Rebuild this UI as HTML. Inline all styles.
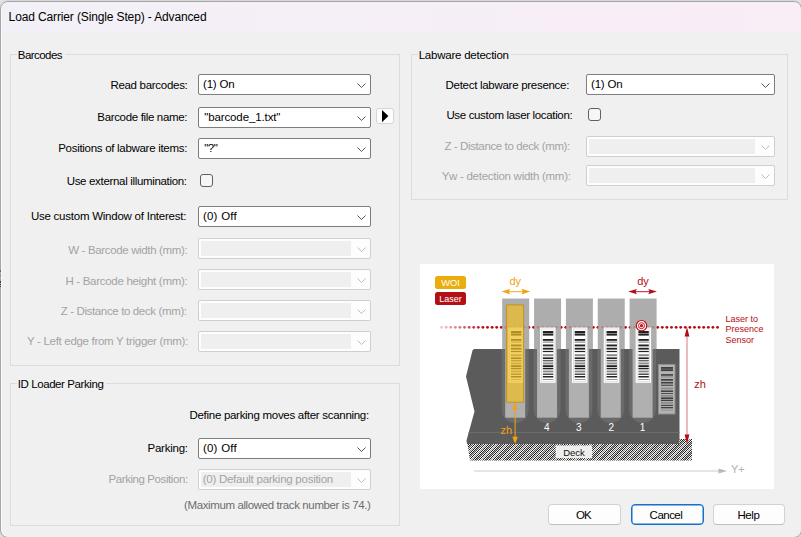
<!DOCTYPE html>
<html><head><meta charset="utf-8"><style>
*{margin:0;padding:0;box-sizing:border-box}
html,body{width:801px;height:537px;overflow:hidden;background:#e3e3e3;font-family:"Liberation Sans",sans-serif;font-size:11.5px;letter-spacing:-0.3px;color:#000}
#win{position:absolute;left:0px;top:1px;width:802px;height:537px;border-radius:8px;background:#f0f0f0;overflow:hidden}
#c{position:absolute;left:0px;top:-1px;width:801px;height:537px}
#brd{position:absolute;left:0px;top:1px;width:802px;height:537px;border-radius:8px;border:1px solid #a6a6a6;box-shadow:0 0 1.5px rgba(0,0,0,.25), inset 1px 0 0 rgba(255,255,255,.6);z-index:5}
#art div{position:absolute;left:0;width:1px;background:#3a3a3a;z-index:6}
#title{position:absolute;left:0;top:0;width:801px;height:32px;background:linear-gradient(90deg,#f2f0f7 0%,#f5eff7 38%,#f7eef7 70%,#f9edf6 100%)}
#title span{position:absolute;left:9px;top:10px;font-size:12px;white-space:nowrap}
.a{position:absolute;white-space:nowrap}
.lbl{position:absolute;white-space:nowrap;text-align:right}
.dis{color:#a3a3a3}
.grp{position:absolute;border:1px solid #dcdcdc}
.gap{position:absolute;height:4px;background:#f0f0f0}
.cb{position:absolute;height:21px;background:#fff;border:1px solid #7d7d7d;border-radius:2px}
.cb .t{position:absolute;left:4px;top:3px;white-space:nowrap}
.cb svg{position:absolute;right:4px;top:8px}
.cb.d{background:#fdfdfd;border-color:#cfcfcf}
.cb.d .in{position:absolute;left:2px;top:2px;bottom:2px;right:19px;background:#efefef}
.chk{position:absolute;width:13px;height:13px;border:1px solid #5f5f5f;border-radius:3px;background:#f6f6f6}
.abtn{position:absolute;width:18px;height:16px;background:#fdfdfd;border:1px solid #d5d5d5;border-radius:3px}
.btn{position:absolute;height:21px;background:#fdfdfd;border:1px solid #d3d3d3;border-bottom-color:#bfbfbf;border-radius:4px;text-align:center;line-height:21px;font-size:11.5px}
.btn.def{border:1px solid #1570cc;box-shadow:inset 0 0 0 0.5px #1570cc}
</style></head><body>
<div id="win"><div id="c">
<div id="title"><span style="left:8.6px;letter-spacing:-0.133px">Load Carrier (Single Step) - Advanced</span></div>
<div class="grp" style="left:10px;top:54px;width:390px;height:312px"></div>
<div class="gap" style="left:17px;top:52px;width:48px"></div>
<div class="a" style="left:17.8px;top:49px;letter-spacing:-0.543px;">Barcodes</div>
<div class="a" style="left:110.4px;top:79px;letter-spacing:-0.292px">Read barcodes:</div>
<div class="cb" style="left:198px;top:74px;width:173px"><span class="t" style="left:4.0px;letter-spacing:-0.18px">(1) On</span><svg width="9" height="5"><path d="M0.5 0.5 L4.5 4.5 L8.5 0.5" fill="none" stroke="#555" stroke-width="1"/></svg></div>
<div class="a" style="left:97.3px;top:111px;letter-spacing:-0.335px">Barcode file name:</div>
<div class="cb" style="left:198px;top:107px;width:173px"><span class="t" style="left:5.2px;letter-spacing:-0.114px">"barcode_1.txt"</span><svg width="9" height="5"><path d="M0.5 0.5 L4.5 4.5 L8.5 0.5" fill="none" stroke="#555" stroke-width="1"/></svg></div>
<div class="a" style="left:58.2px;top:142px;letter-spacing:-0.292px">Positions of labware items:</div>
<div class="cb" style="left:198px;top:138px;width:173px"><span class="t" style="left:5.2px;letter-spacing:-0.4px">"?"</span><svg width="9" height="5"><path d="M0.5 0.5 L4.5 4.5 L8.5 0.5" fill="none" stroke="#555" stroke-width="1"/></svg></div>
<div class="a" style="left:66.7px;top:175px;letter-spacing:-0.324px">Use external illumination:</div>
<div class="chk" style="left:200px;top:174px"></div>
<div class="a" style="left:30.9px;top:210px;letter-spacing:-0.238px">Use custom Window of Interest:</div>
<div class="cb" style="left:198px;top:206px;width:173px"><span class="t" style="left:3.9px;letter-spacing:0.25px">(0) Off</span><svg width="9" height="5"><path d="M0.5 0.5 L4.5 4.5 L8.5 0.5" fill="none" stroke="#555" stroke-width="1"/></svg></div>
<div class="a dis" style="left:68.2px;top:244px;letter-spacing:-0.345px">W - Barcode width (mm):</div>
<div class="cb d" style="left:198px;top:238px;width:173px"><div class="in"></div><svg width="9" height="5"><path d="M0.5 0.5 L4.5 4.5 L8.5 0.5" fill="none" stroke="#bdbdbd" stroke-width="1"/></svg></div>
<div class="a dis" style="left:65.4px;top:275px;letter-spacing:-0.296px">H - Barcode height (mm):</div>
<div class="cb d" style="left:198px;top:269px;width:173px"><div class="in"></div><svg width="9" height="5"><path d="M0.5 0.5 L4.5 4.5 L8.5 0.5" fill="none" stroke="#bdbdbd" stroke-width="1"/></svg></div>
<div class="a dis" style="left:60.7px;top:305px;letter-spacing:-0.364px">Z - Distance to deck (mm):</div>
<div class="cb d" style="left:198px;top:300px;width:173px"><div class="in"></div><svg width="9" height="5"><path d="M0.5 0.5 L4.5 4.5 L8.5 0.5" fill="none" stroke="#bdbdbd" stroke-width="1"/></svg></div>
<div class="a dis" style="left:27.0px;top:335px;letter-spacing:-0.303px">Y - Left edge from Y trigger (mm):</div>
<div class="cb d" style="left:198px;top:331px;width:173px"><div class="in"></div><svg width="9" height="5"><path d="M0.5 0.5 L4.5 4.5 L8.5 0.5" fill="none" stroke="#bdbdbd" stroke-width="1"/></svg></div>
<div class="abtn" style="left:376px;top:108px"><svg width="8" height="13" style="position:absolute;left:5px;top:1px"><path d="M0 0 L6.4 6.1 L0 12.2 Z" fill="#000"/></svg></div>
<div class="grp" style="left:10px;top:383px;width:390px;height:143px"></div>
<div class="gap" style="left:17px;top:381px;width:89px"></div>
<div class="a" style="left:17.7px;top:378px;letter-spacing:-0.406px;">ID Loader Parking</div>
<div class="a" style="left:189.5px;top:409px;letter-spacing:-0.291px;">Define parking moves after scanning:</div>
<div class="a" style="left:147.5px;top:442px;letter-spacing:-0.243px">Parking:</div>
<div class="cb" style="left:198px;top:438px;width:173px"><span class="t" style="left:3.9px;letter-spacing:0.25px">(0) Off</span><svg width="9" height="5"><path d="M0.5 0.5 L4.5 4.5 L8.5 0.5" fill="none" stroke="#555" stroke-width="1"/></svg></div>
<div class="a dis" style="left:108.5px;top:473px;letter-spacing:-0.419px">Parking Position:</div>
<div class="cb d" style="left:198px;top:469px;width:173px"><div class="in"></div><span class="t dis" style="left:3.7px;letter-spacing:-0.256px">(0) Default parking position</span><svg width="9" height="5"><path d="M0.5 0.5 L4.5 4.5 L8.5 0.5" fill="none" stroke="#bdbdbd" stroke-width="1"/></svg></div>
<div class="a" style="left:184.0px;top:499px;letter-spacing:-0.383px;color:#6d6d6d">(Maximum allowed track number is 74.)</div>
<div class="grp" style="left:411px;top:54px;width:377px;height:146px"></div>
<div class="gap" style="left:418px;top:52px;width:93px"></div>
<div class="a" style="left:418.7px;top:49px;letter-spacing:-0.231px;">Labware detection</div>
<div class="a" style="left:445.5px;top:79px;letter-spacing:-0.283px">Detect labware presence:</div>
<div class="cb" style="left:586px;top:74px;width:189px"><span class="t" style="left:4.0px;letter-spacing:-0.18px">(1) On</span><svg width="9" height="5"><path d="M0.5 0.5 L4.5 4.5 L8.5 0.5" fill="none" stroke="#555" stroke-width="1"/></svg></div>
<div class="a" style="left:446.4px;top:109px;letter-spacing:-0.344px">Use custom laser location:</div>
<div class="chk" style="left:588px;top:108px"></div>
<div class="a dis" style="left:444.4px;top:140px;letter-spacing:-0.384px">Z - Distance to deck (mm):</div>
<div class="cb d" style="left:586px;top:136px;width:189px"><div class="in"></div><svg width="9" height="5"><path d="M0.5 0.5 L4.5 4.5 L8.5 0.5" fill="none" stroke="#bdbdbd" stroke-width="1"/></svg></div>
<div class="a dis" style="left:441.7px;top:170px;letter-spacing:-0.276px">Yw - detection width (mm):</div>
<div class="cb d" style="left:586px;top:165px;width:189px"><div class="in"></div><svg width="9" height="5"><path d="M0.5 0.5 L4.5 4.5 L8.5 0.5" fill="none" stroke="#bdbdbd" stroke-width="1"/></svg></div>
<div class="btn" style="left:548px;top:504px;width:73px"></div>
<div class="btn def" style="left:631px;top:504px;width:73px"></div>
<div class="btn" style="left:713px;top:504px;width:72px"></div>
<div class="a" style="left:576.1px;top:509px;letter-spacing:-1.0px">OK</div>
<div class="a" style="left:649.6px;top:509px;letter-spacing:-0.52px">Cancel</div>
<div class="a" style="left:737.5px;top:509px;letter-spacing:-0.433px">Help</div>
<svg style="position:absolute;left:420px;top:264px;letter-spacing:0" width="354" height="225" viewBox="420 264 354 225" font-family="Liberation Sans, sans-serif">
<defs>
<pattern id="hatch" patternUnits="userSpaceOnUse" width="2" height="2">
<rect width="2" height="2" fill="#fff"/><rect x="0" y="0" width="1" height="1" fill="#1e1e1e"/><rect x="1" y="1" width="1" height="1" fill="#1e1e1e"/>
</pattern>
<pattern id="hatch2" patternUnits="userSpaceOnUse" width="3.5" height="3.5" patternTransform="rotate(-45)">
<rect x="0" y="0" width="3.5" height="0.9" fill="#a0a0a0"/>
</pattern>
<linearGradient id="fade" x1="441" y1="0" x2="485" y2="0" gradientUnits="userSpaceOnUse">
<stop offset="0" stop-color="#b40c14" stop-opacity="0"/><stop offset="1" stop-color="#b40c14" stop-opacity="1"/>
</linearGradient>
</defs>
<rect x="420" y="264" width="354" height="225" fill="#fff"/>
<rect x="435" y="276" width="31" height="13" rx="2.5" fill="#e9ae0b"/>
<text x="450.5" y="286.2" font-size="9.4" fill="#fff" text-anchor="middle">WOI</text>
<rect x="435" y="292" width="31" height="13" rx="2.5" fill="#b30f15"/>
<text x="450.5" y="302.3" font-size="9" fill="#fff" text-anchor="middle">Laser</text>
<g><circle cx="441.50" cy="327.3" r="1.35" fill="url(#fade)" opacity="1.0"/><circle cx="446.10" cy="327.3" r="1.35" fill="url(#fade)" opacity="1.0"/><circle cx="450.70" cy="327.3" r="1.35" fill="url(#fade)" opacity="1.0"/><circle cx="455.30" cy="327.3" r="1.35" fill="url(#fade)" opacity="1.0"/><circle cx="459.90" cy="327.3" r="1.35" fill="url(#fade)" opacity="1.0"/><circle cx="464.50" cy="327.3" r="1.35" fill="url(#fade)" opacity="1.0"/><circle cx="469.10" cy="327.3" r="1.35" fill="url(#fade)" opacity="1.0"/><circle cx="473.70" cy="327.3" r="1.35" fill="url(#fade)" opacity="1.0"/><circle cx="478.30" cy="327.3" r="1.35" fill="url(#fade)" opacity="1.0"/><circle cx="482.90" cy="327.3" r="1.35" fill="url(#fade)" opacity="1.0"/><circle cx="487.50" cy="327.3" r="1.35" fill="url(#fade)" opacity="1.0"/><circle cx="492.10" cy="327.3" r="1.35" fill="url(#fade)" opacity="1.0"/><circle cx="496.70" cy="327.3" r="1.35" fill="url(#fade)" opacity="1.0"/><circle cx="501.30" cy="327.3" r="1.35" fill="url(#fade)" opacity="1.0"/><circle cx="505.90" cy="327.3" r="1.35" fill="url(#fade)" opacity="1.0"/><circle cx="510.50" cy="327.3" r="1.35" fill="url(#fade)" opacity="1.0"/><circle cx="515.10" cy="327.3" r="1.35" fill="url(#fade)" opacity="1.0"/><circle cx="519.70" cy="327.3" r="1.35" fill="url(#fade)" opacity="1.0"/><circle cx="524.30" cy="327.3" r="1.35" fill="url(#fade)" opacity="1.0"/><circle cx="528.90" cy="327.3" r="1.35" fill="url(#fade)" opacity="1.0"/><circle cx="533.50" cy="327.3" r="1.35" fill="url(#fade)" opacity="1.0"/><circle cx="538.10" cy="327.3" r="1.35" fill="url(#fade)" opacity="1.0"/><circle cx="542.70" cy="327.3" r="1.35" fill="url(#fade)" opacity="1.0"/><circle cx="547.30" cy="327.3" r="1.35" fill="url(#fade)" opacity="1.0"/><circle cx="551.90" cy="327.3" r="1.35" fill="url(#fade)" opacity="1.0"/><circle cx="556.50" cy="327.3" r="1.35" fill="url(#fade)" opacity="1.0"/><circle cx="561.10" cy="327.3" r="1.35" fill="url(#fade)" opacity="1.0"/><circle cx="565.70" cy="327.3" r="1.35" fill="url(#fade)" opacity="1.0"/><circle cx="570.30" cy="327.3" r="1.35" fill="url(#fade)" opacity="1.0"/><circle cx="574.90" cy="327.3" r="1.35" fill="url(#fade)" opacity="1.0"/><circle cx="579.50" cy="327.3" r="1.35" fill="url(#fade)" opacity="1.0"/><circle cx="584.10" cy="327.3" r="1.35" fill="url(#fade)" opacity="1.0"/><circle cx="588.70" cy="327.3" r="1.35" fill="url(#fade)" opacity="1.0"/><circle cx="593.30" cy="327.3" r="1.35" fill="url(#fade)" opacity="1.0"/><circle cx="597.90" cy="327.3" r="1.35" fill="url(#fade)" opacity="1.0"/><circle cx="602.50" cy="327.3" r="1.35" fill="url(#fade)" opacity="1.0"/><circle cx="607.10" cy="327.3" r="1.35" fill="url(#fade)" opacity="1.0"/><circle cx="611.70" cy="327.3" r="1.35" fill="url(#fade)" opacity="1.0"/><circle cx="616.30" cy="327.3" r="1.35" fill="url(#fade)" opacity="1.0"/><circle cx="620.90" cy="327.3" r="1.35" fill="url(#fade)" opacity="1.0"/><circle cx="625.50" cy="327.3" r="1.35" fill="url(#fade)" opacity="1.0"/><circle cx="630.10" cy="327.3" r="1.35" fill="url(#fade)" opacity="1.0"/><circle cx="634.70" cy="327.3" r="1.35" fill="url(#fade)" opacity="1.0"/><circle cx="639.30" cy="327.3" r="1.35" fill="url(#fade)" opacity="1.0"/><circle cx="643.90" cy="327.3" r="1.35" fill="url(#fade)" opacity="1.0"/><circle cx="648.50" cy="327.3" r="1.35" fill="url(#fade)" opacity="1.0"/><circle cx="653.10" cy="327.3" r="1.35" fill="url(#fade)" opacity="1.0"/><circle cx="657.70" cy="327.3" r="1.35" fill="url(#fade)" opacity="1.0"/><circle cx="662.30" cy="327.3" r="1.35" fill="url(#fade)" opacity="1.0"/><circle cx="666.90" cy="327.3" r="1.35" fill="url(#fade)" opacity="1.0"/><circle cx="671.50" cy="327.3" r="1.35" fill="url(#fade)" opacity="1.0"/><circle cx="676.10" cy="327.3" r="1.35" fill="url(#fade)" opacity="1.0"/><circle cx="680.70" cy="327.3" r="1.35" fill="url(#fade)" opacity="1.0"/><circle cx="685.30" cy="327.3" r="1.35" fill="url(#fade)" opacity="1.0"/><circle cx="689.90" cy="327.3" r="1.35" fill="url(#fade)" opacity="1.0"/><circle cx="694.50" cy="327.3" r="1.35" fill="url(#fade)" opacity="1.0"/><circle cx="699.10" cy="327.3" r="1.35" fill="url(#fade)" opacity="1.0"/><circle cx="703.70" cy="327.3" r="1.35" fill="url(#fade)" opacity="1.0"/><circle cx="708.30" cy="327.3" r="1.35" fill="url(#fade)" opacity="1.0"/><circle cx="712.90" cy="327.3" r="1.35" fill="url(#fade)" opacity="1.0"/><circle cx="717.50" cy="327.3" r="1.35" fill="url(#fade)" opacity="1.0"/></g>
<rect x="502.2" y="298.5" width="27" height="51" fill="#adadad"/>
<rect x="534.05" y="298.5" width="27" height="51" fill="#adadad"/>
<rect x="565.9" y="298.5" width="27" height="51" fill="#adadad"/>
<rect x="597.75" y="298.5" width="27" height="51" fill="#adadad"/>
<rect x="629.6" y="298.5" width="27" height="51" fill="#adadad"/>
<g opacity="0.22"><circle cx="441.50" cy="327.3" r="1.35" fill="#b40c14" opacity="1.0"/><circle cx="446.10" cy="327.3" r="1.35" fill="#b40c14" opacity="1.0"/><circle cx="450.70" cy="327.3" r="1.35" fill="#b40c14" opacity="1.0"/><circle cx="455.30" cy="327.3" r="1.35" fill="#b40c14" opacity="1.0"/><circle cx="459.90" cy="327.3" r="1.35" fill="#b40c14" opacity="1.0"/><circle cx="464.50" cy="327.3" r="1.35" fill="#b40c14" opacity="1.0"/><circle cx="469.10" cy="327.3" r="1.35" fill="#b40c14" opacity="1.0"/><circle cx="473.70" cy="327.3" r="1.35" fill="#b40c14" opacity="1.0"/><circle cx="478.30" cy="327.3" r="1.35" fill="#b40c14" opacity="1.0"/><circle cx="482.90" cy="327.3" r="1.35" fill="#b40c14" opacity="1.0"/><circle cx="487.50" cy="327.3" r="1.35" fill="#b40c14" opacity="1.0"/><circle cx="492.10" cy="327.3" r="1.35" fill="#b40c14" opacity="1.0"/><circle cx="496.70" cy="327.3" r="1.35" fill="#b40c14" opacity="1.0"/><circle cx="501.30" cy="327.3" r="1.35" fill="#b40c14" opacity="1.0"/><circle cx="505.90" cy="327.3" r="1.35" fill="#b40c14" opacity="1.0"/><circle cx="510.50" cy="327.3" r="1.35" fill="#b40c14" opacity="1.0"/><circle cx="515.10" cy="327.3" r="1.35" fill="#b40c14" opacity="1.0"/><circle cx="519.70" cy="327.3" r="1.35" fill="#b40c14" opacity="1.0"/><circle cx="524.30" cy="327.3" r="1.35" fill="#b40c14" opacity="1.0"/><circle cx="528.90" cy="327.3" r="1.35" fill="#b40c14" opacity="1.0"/><circle cx="533.50" cy="327.3" r="1.35" fill="#b40c14" opacity="1.0"/><circle cx="538.10" cy="327.3" r="1.35" fill="#b40c14" opacity="1.0"/><circle cx="542.70" cy="327.3" r="1.35" fill="#b40c14" opacity="1.0"/><circle cx="547.30" cy="327.3" r="1.35" fill="#b40c14" opacity="1.0"/><circle cx="551.90" cy="327.3" r="1.35" fill="#b40c14" opacity="1.0"/><circle cx="556.50" cy="327.3" r="1.35" fill="#b40c14" opacity="1.0"/><circle cx="561.10" cy="327.3" r="1.35" fill="#b40c14" opacity="1.0"/><circle cx="565.70" cy="327.3" r="1.35" fill="#b40c14" opacity="1.0"/><circle cx="570.30" cy="327.3" r="1.35" fill="#b40c14" opacity="1.0"/><circle cx="574.90" cy="327.3" r="1.35" fill="#b40c14" opacity="1.0"/><circle cx="579.50" cy="327.3" r="1.35" fill="#b40c14" opacity="1.0"/><circle cx="584.10" cy="327.3" r="1.35" fill="#b40c14" opacity="1.0"/><circle cx="588.70" cy="327.3" r="1.35" fill="#b40c14" opacity="1.0"/><circle cx="593.30" cy="327.3" r="1.35" fill="#b40c14" opacity="1.0"/><circle cx="597.90" cy="327.3" r="1.35" fill="#b40c14" opacity="1.0"/><circle cx="602.50" cy="327.3" r="1.35" fill="#b40c14" opacity="1.0"/><circle cx="607.10" cy="327.3" r="1.35" fill="#b40c14" opacity="1.0"/><circle cx="611.70" cy="327.3" r="1.35" fill="#b40c14" opacity="1.0"/><circle cx="616.30" cy="327.3" r="1.35" fill="#b40c14" opacity="1.0"/><circle cx="620.90" cy="327.3" r="1.35" fill="#b40c14" opacity="1.0"/><circle cx="625.50" cy="327.3" r="1.35" fill="#b40c14" opacity="1.0"/><circle cx="630.10" cy="327.3" r="1.35" fill="#b40c14" opacity="1.0"/><circle cx="634.70" cy="327.3" r="1.35" fill="#b40c14" opacity="1.0"/><circle cx="639.30" cy="327.3" r="1.35" fill="#b40c14" opacity="1.0"/><circle cx="643.90" cy="327.3" r="1.35" fill="#b40c14" opacity="1.0"/><circle cx="648.50" cy="327.3" r="1.35" fill="#b40c14" opacity="1.0"/><circle cx="653.10" cy="327.3" r="1.35" fill="#b40c14" opacity="1.0"/><circle cx="657.70" cy="327.3" r="1.35" fill="#b40c14" opacity="1.0"/><circle cx="662.30" cy="327.3" r="1.35" fill="#b40c14" opacity="1.0"/><circle cx="666.90" cy="327.3" r="1.35" fill="#b40c14" opacity="1.0"/><circle cx="671.50" cy="327.3" r="1.35" fill="#b40c14" opacity="1.0"/><circle cx="676.10" cy="327.3" r="1.35" fill="#b40c14" opacity="1.0"/><circle cx="680.70" cy="327.3" r="1.35" fill="#b40c14" opacity="1.0"/><circle cx="685.30" cy="327.3" r="1.35" fill="#b40c14" opacity="1.0"/><circle cx="689.90" cy="327.3" r="1.35" fill="#b40c14" opacity="1.0"/><circle cx="694.50" cy="327.3" r="1.35" fill="#b40c14" opacity="1.0"/><circle cx="699.10" cy="327.3" r="1.35" fill="#b40c14" opacity="1.0"/><circle cx="703.70" cy="327.3" r="1.35" fill="#b40c14" opacity="1.0"/><circle cx="708.30" cy="327.3" r="1.35" fill="#b40c14" opacity="1.0"/><circle cx="712.90" cy="327.3" r="1.35" fill="#b40c14" opacity="1.0"/><circle cx="717.50" cy="327.3" r="1.35" fill="#b40c14" opacity="1.0"/></g>
<path d="M474.5,349 L679.5,349 L679.5,444 L467,444 L466.5,440.5 L474.5,411.5 L466,376.5 L472.5,350.5 Q473,349 474.5,349 Z" fill="#5b5b5b"/>
<rect x="468.5" y="432" width="211" height="1" fill="#6c6c6c"/>
<path d="M501.7,349 L501.7,409.5 A13.5,13.5 0 0 0 528.7,409.5 L528.7,349 Z" fill="#6a6a6a"/>
<rect x="505.2" y="349" width="20" height="68.7" fill="#b0b0b0"/>
<path d="M533.55,349 L533.55,409.5 A13.5,13.5 0 0 0 560.55,409.5 L560.55,349 Z" fill="#6a6a6a"/>
<rect x="537.05" y="349" width="20" height="68.7" fill="#b0b0b0"/>
<path d="M565.4,349 L565.4,409.5 A13.5,13.5 0 0 0 592.4,409.5 L592.4,349 Z" fill="#6a6a6a"/>
<rect x="568.9" y="349" width="20" height="68.7" fill="#b0b0b0"/>
<path d="M597.25,349 L597.25,409.5 A13.5,13.5 0 0 0 624.25,409.5 L624.25,349 Z" fill="#6a6a6a"/>
<rect x="600.75" y="349" width="20" height="68.7" fill="#b0b0b0"/>
<path d="M629.1,349 L629.1,409.5 A13.5,13.5 0 0 0 656.1,409.5 L656.1,349 Z" fill="#6a6a6a"/>
<rect x="632.6" y="349" width="20" height="68.7" fill="#b0b0b0"/>
<text x="546.7" y="430.5" font-size="10" fill="#fff" text-anchor="middle">4</text>
<text x="578.7" y="430.5" font-size="10" fill="#fff" text-anchor="middle">3</text>
<text x="611.2" y="430.5" font-size="10" fill="#fff" text-anchor="middle">2</text>
<text x="642.6" y="430.5" font-size="10" fill="#fff" text-anchor="middle">1</text>
<rect x="508.2" y="327.5" width="15.5" height="55.3" fill="#fff"/>
<rect x="509.7" y="329" width="12.5" height="52.3" fill="none" stroke="#d8d8d8" stroke-width="0.8"/>
<rect x="511.0" y="331.00" width="10.4" height="2.10" fill="#222"/><rect x="511.0" y="333.50" width="10.4" height="2.10" fill="#222"/><rect x="511.0" y="339.00" width="10.4" height="1.80" fill="#222"/><rect x="511.0" y="341.50" width="10.4" height="1.20" fill="#8a8a8a"/><rect x="511.0" y="344.50" width="10.4" height="1.90" fill="#222"/><rect x="511.0" y="347.80" width="10.4" height="1.80" fill="#222"/><rect x="511.0" y="350.90" width="10.4" height="1.20" fill="#222"/><rect x="511.0" y="354.20" width="10.4" height="2.00" fill="#8a8a8a"/><rect x="511.0" y="357.40" width="10.4" height="1.70" fill="#222"/><rect x="511.0" y="360.30" width="10.4" height="1.00" fill="#222"/><rect x="511.0" y="362.50" width="10.4" height="1.90" fill="#8a8a8a"/><rect x="511.0" y="365.20" width="10.4" height="2.00" fill="#222"/><rect x="511.0" y="368.00" width="10.4" height="1.30" fill="#222"/><rect x="511.0" y="370.50" width="10.4" height="1.90" fill="#8a8a8a"/><rect x="511.0" y="373.60" width="10.4" height="1.20" fill="#222"/><rect x="511.0" y="376.00" width="10.4" height="1.50" fill="#222"/><rect x="511.0" y="379.10" width="10.4" height="0.90" fill="#8a8a8a"/>
<rect x="540.05" y="327.5" width="15.5" height="55.3" fill="#fff"/>
<rect x="541.55" y="329" width="12.5" height="52.3" fill="none" stroke="#d8d8d8" stroke-width="0.8"/>
<rect x="542.8499999999999" y="331.00" width="10.4" height="2.10" fill="#222"/><rect x="542.8499999999999" y="333.50" width="10.4" height="2.10" fill="#222"/><rect x="542.8499999999999" y="339.00" width="10.4" height="1.80" fill="#222"/><rect x="542.8499999999999" y="341.50" width="10.4" height="1.20" fill="#8a8a8a"/><rect x="542.8499999999999" y="344.50" width="10.4" height="1.90" fill="#222"/><rect x="542.8499999999999" y="347.80" width="10.4" height="1.80" fill="#222"/><rect x="542.8499999999999" y="350.90" width="10.4" height="1.20" fill="#222"/><rect x="542.8499999999999" y="354.20" width="10.4" height="2.00" fill="#8a8a8a"/><rect x="542.8499999999999" y="357.40" width="10.4" height="1.70" fill="#222"/><rect x="542.8499999999999" y="360.30" width="10.4" height="1.00" fill="#222"/><rect x="542.8499999999999" y="362.50" width="10.4" height="1.90" fill="#8a8a8a"/><rect x="542.8499999999999" y="365.20" width="10.4" height="2.00" fill="#222"/><rect x="542.8499999999999" y="368.00" width="10.4" height="1.30" fill="#222"/><rect x="542.8499999999999" y="370.50" width="10.4" height="1.90" fill="#8a8a8a"/><rect x="542.8499999999999" y="373.60" width="10.4" height="1.20" fill="#222"/><rect x="542.8499999999999" y="376.00" width="10.4" height="1.50" fill="#222"/><rect x="542.8499999999999" y="379.10" width="10.4" height="0.90" fill="#8a8a8a"/>
<rect x="571.9" y="327.5" width="15.5" height="55.3" fill="#fff"/>
<rect x="573.4" y="329" width="12.5" height="52.3" fill="none" stroke="#d8d8d8" stroke-width="0.8"/>
<rect x="574.6999999999999" y="331.00" width="10.4" height="2.10" fill="#222"/><rect x="574.6999999999999" y="333.50" width="10.4" height="2.10" fill="#222"/><rect x="574.6999999999999" y="339.00" width="10.4" height="1.80" fill="#222"/><rect x="574.6999999999999" y="341.50" width="10.4" height="1.20" fill="#8a8a8a"/><rect x="574.6999999999999" y="344.50" width="10.4" height="1.90" fill="#222"/><rect x="574.6999999999999" y="347.80" width="10.4" height="1.80" fill="#222"/><rect x="574.6999999999999" y="350.90" width="10.4" height="1.20" fill="#222"/><rect x="574.6999999999999" y="354.20" width="10.4" height="2.00" fill="#8a8a8a"/><rect x="574.6999999999999" y="357.40" width="10.4" height="1.70" fill="#222"/><rect x="574.6999999999999" y="360.30" width="10.4" height="1.00" fill="#222"/><rect x="574.6999999999999" y="362.50" width="10.4" height="1.90" fill="#8a8a8a"/><rect x="574.6999999999999" y="365.20" width="10.4" height="2.00" fill="#222"/><rect x="574.6999999999999" y="368.00" width="10.4" height="1.30" fill="#222"/><rect x="574.6999999999999" y="370.50" width="10.4" height="1.90" fill="#8a8a8a"/><rect x="574.6999999999999" y="373.60" width="10.4" height="1.20" fill="#222"/><rect x="574.6999999999999" y="376.00" width="10.4" height="1.50" fill="#222"/><rect x="574.6999999999999" y="379.10" width="10.4" height="0.90" fill="#8a8a8a"/>
<rect x="603.75" y="327.5" width="15.5" height="55.3" fill="#fff"/>
<rect x="605.25" y="329" width="12.5" height="52.3" fill="none" stroke="#d8d8d8" stroke-width="0.8"/>
<rect x="606.55" y="331.00" width="10.4" height="2.10" fill="#222"/><rect x="606.55" y="333.50" width="10.4" height="2.10" fill="#222"/><rect x="606.55" y="339.00" width="10.4" height="1.80" fill="#222"/><rect x="606.55" y="341.50" width="10.4" height="1.20" fill="#8a8a8a"/><rect x="606.55" y="344.50" width="10.4" height="1.90" fill="#222"/><rect x="606.55" y="347.80" width="10.4" height="1.80" fill="#222"/><rect x="606.55" y="350.90" width="10.4" height="1.20" fill="#222"/><rect x="606.55" y="354.20" width="10.4" height="2.00" fill="#8a8a8a"/><rect x="606.55" y="357.40" width="10.4" height="1.70" fill="#222"/><rect x="606.55" y="360.30" width="10.4" height="1.00" fill="#222"/><rect x="606.55" y="362.50" width="10.4" height="1.90" fill="#8a8a8a"/><rect x="606.55" y="365.20" width="10.4" height="2.00" fill="#222"/><rect x="606.55" y="368.00" width="10.4" height="1.30" fill="#222"/><rect x="606.55" y="370.50" width="10.4" height="1.90" fill="#8a8a8a"/><rect x="606.55" y="373.60" width="10.4" height="1.20" fill="#222"/><rect x="606.55" y="376.00" width="10.4" height="1.50" fill="#222"/><rect x="606.55" y="379.10" width="10.4" height="0.90" fill="#8a8a8a"/>
<rect x="635.6" y="327.5" width="15.5" height="55.3" fill="#fff"/>
<rect x="637.1" y="329" width="12.5" height="52.3" fill="none" stroke="#d8d8d8" stroke-width="0.8"/>
<rect x="638.4" y="331.00" width="10.4" height="2.10" fill="#222"/><rect x="638.4" y="333.50" width="10.4" height="2.10" fill="#222"/><rect x="638.4" y="339.00" width="10.4" height="1.80" fill="#222"/><rect x="638.4" y="341.50" width="10.4" height="1.20" fill="#8a8a8a"/><rect x="638.4" y="344.50" width="10.4" height="1.90" fill="#222"/><rect x="638.4" y="347.80" width="10.4" height="1.80" fill="#222"/><rect x="638.4" y="350.90" width="10.4" height="1.20" fill="#222"/><rect x="638.4" y="354.20" width="10.4" height="2.00" fill="#8a8a8a"/><rect x="638.4" y="357.40" width="10.4" height="1.70" fill="#222"/><rect x="638.4" y="360.30" width="10.4" height="1.00" fill="#222"/><rect x="638.4" y="362.50" width="10.4" height="1.90" fill="#8a8a8a"/><rect x="638.4" y="365.20" width="10.4" height="2.00" fill="#222"/><rect x="638.4" y="368.00" width="10.4" height="1.30" fill="#222"/><rect x="638.4" y="370.50" width="10.4" height="1.90" fill="#8a8a8a"/><rect x="638.4" y="373.60" width="10.4" height="1.20" fill="#222"/><rect x="638.4" y="376.00" width="10.4" height="1.50" fill="#222"/><rect x="638.4" y="379.10" width="10.4" height="0.90" fill="#8a8a8a"/>
<rect x="658.5" y="364.5" width="16.5" height="49.5" fill="#b3b3b3" stroke="#8e8e8e" stroke-width="1"/>
<rect x="661" y="367.00" width="12" height="1.87" fill="#404040"/><rect x="661" y="369.22" width="12" height="1.87" fill="#404040"/><rect x="661" y="374.11" width="12" height="1.60" fill="#404040"/><rect x="661" y="376.33" width="12" height="1.07" fill="#8c8c8c"/><rect x="661" y="379.00" width="12" height="1.69" fill="#404040"/><rect x="661" y="381.93" width="12" height="1.60" fill="#404040"/><rect x="661" y="384.69" width="12" height="1.07" fill="#404040"/><rect x="661" y="387.62" width="12" height="1.78" fill="#8c8c8c"/><rect x="661" y="390.47" width="12" height="1.51" fill="#404040"/><rect x="661" y="393.04" width="12" height="0.89" fill="#404040"/><rect x="661" y="395.00" width="12" height="1.69" fill="#8c8c8c"/><rect x="661" y="397.40" width="12" height="1.78" fill="#404040"/><rect x="661" y="399.89" width="12" height="1.16" fill="#404040"/><rect x="661" y="402.11" width="12" height="1.69" fill="#8c8c8c"/><rect x="661" y="404.87" width="12" height="1.07" fill="#404040"/><rect x="661" y="407.00" width="12" height="1.33" fill="#404040"/><rect x="661" y="409.76" width="12" height="0.80" fill="#8c8c8c"/>
<rect x="506.6" y="304.9" width="17" height="97.3" fill="rgb(238,190,37)" fill-opacity="0.71" stroke="#c98f1d" stroke-width="1"/>
<circle cx="641.5" cy="325.7" r="5.2" fill="#fff" stroke="#c0101a" stroke-width="1.2"/>
<circle cx="641.5" cy="325.7" r="3" fill="none" stroke="#c0101a" stroke-width="1"/>
<circle cx="641.5" cy="325.7" r="1.6" fill="#c0101a"/>
<text x="515.3" y="285" font-size="11" fill="#f2a20f" text-anchor="middle">dy</text>
<rect x="508" y="291.1" width="15" height="1.1" fill="#f2a20f" opacity="0.85"/>
<path d="M501.5,291.6 L510.3,288.8 L508.8,291.6 L510.3,294.4 Z M530.2,291.6 L521.4,288.8 L522.9,291.6 L521.4,294.4 Z" fill="#f2a20f"/>
<text x="643" y="285" font-size="11" fill="#b40c14" text-anchor="middle">dy</text>
<rect x="635" y="291.1" width="15" height="1.1" fill="#b40c14" opacity="0.85"/>
<path d="M628.2,291.6 L636.9,288.9 L635.4,291.6 L636.9,294.3 Z M656.9,291.6 L648.2,288.9 L649.7,291.6 L648.2,294.3 Z" fill="#b40c14"/>
<rect x="514.6" y="406" width="1" height="34" fill="#f2a20f"/>
<path d="M515.1,402.3 L512.3,409.5 L517.9,409.5 Z M515.1,444 L512.3,436.8 L517.9,436.8 Z" fill="#f2a20f"/>
<text x="506.3" y="434" font-size="11" fill="#f2a20f" text-anchor="middle">zh</text>
<path d="M467.5,444 L679.5,444 L679.5,439 L692,439 L692,460.5 L470,460.5 Z" fill="url(#hatch)"/>
<path d="M467.5,444 L679.5,444 L679.5,439 L692,439 L692,460.5 L470,460.5 Z" fill="url(#hatch2)"/>
<rect x="555.7" y="445.5" width="36.4" height="12.7" fill="#eeeeee"/>
<text x="574" y="455.5" font-size="9.5" fill="#111" text-anchor="middle">Deck</text>
<rect x="686.5" y="333" width="1" height="104" fill="#d77a80"/>
<path d="M687,327 L684.6,336.5 L689.4,336.5 Z M687,444 L684.6,434.5 L689.4,434.5 Z" fill="#b40c14"/>
<text x="700" y="388" font-size="11" fill="#b40c14" text-anchor="middle">zh</text>
<text font-size="9" fill="#b40c14"><tspan x="725.5" y="321.7">Laser to</tspan><tspan x="725.5" y="332.4">Presence</tspan><tspan x="725.5" y="343.3">Sensor</tspan></text>
<rect x="474" y="470.5" width="246" height="1" fill="#cbcbcb"/>
<path d="M727,471 L718.5,468.5 L718.5,473.5 Z" fill="#b9b9b9"/>
<text x="731" y="473" font-size="11" fill="#b0b0b0">Y+</text>
</svg>
</div></div>
<div id="brd"></div>
<div id="art"><div style="top:270px;height:2px;opacity:.6"></div><div style="top:275px;height:1px;opacity:.35"></div><div style="top:281px;height:2px"></div><div style="top:284px;height:1px"></div><div style="top:286px;height:1px"></div></div>
</body></html>
